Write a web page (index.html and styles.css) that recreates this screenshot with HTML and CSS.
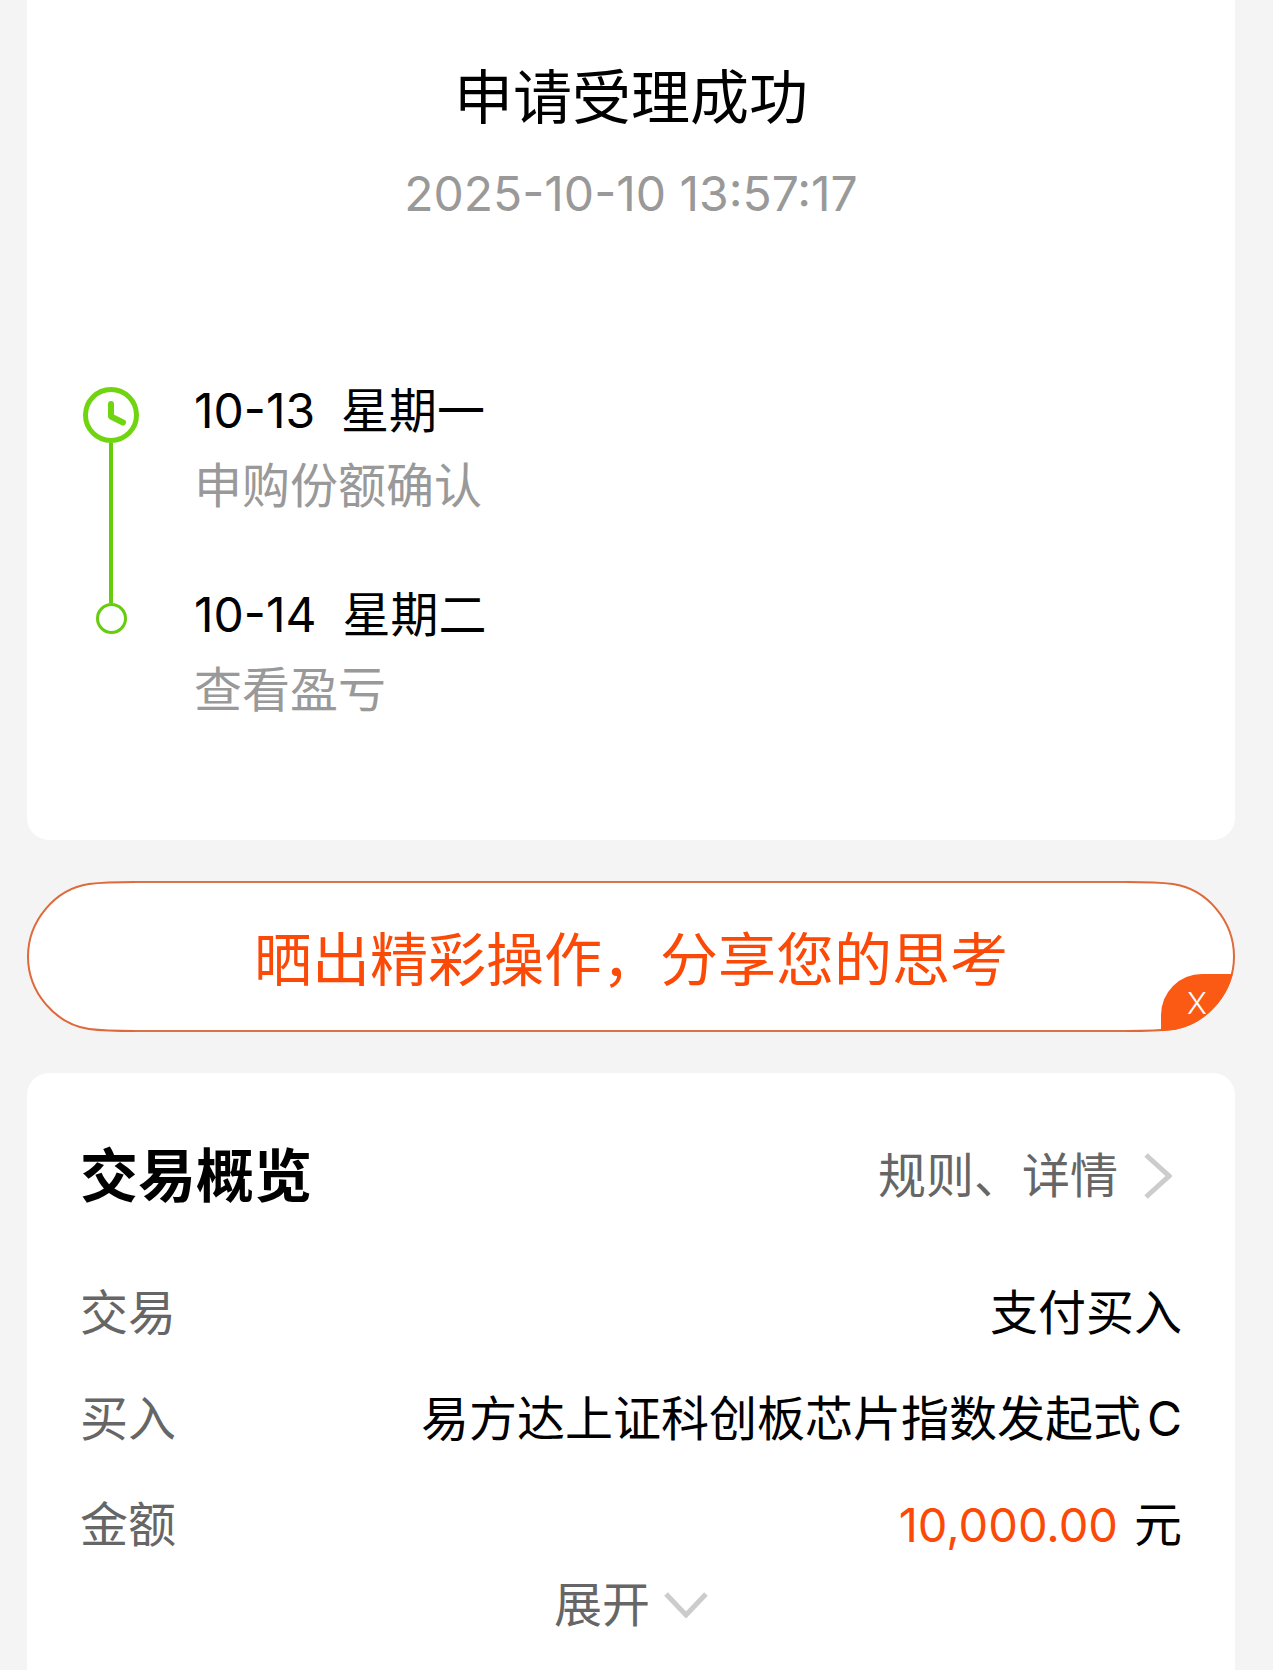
FILE: index.html
```html
<!DOCTYPE html>
<html lang="zh-CN">
<head>
    <meta charset="UTF-8">
    <meta name="viewport" content="width=device-width, initial-scale=1.0">
    <title>申请受理成功</title>
    <link rel="stylesheet" href="styles.css">
</head>
<body>
    <section class="card result">
        <h1>申请受理成功</h1>
        <time class="result-time">2025-10-10 13:57:17</time>
        <ol class="timeline">
            <li class="step">
                <div class="marker">
                    <svg class="clock" viewBox="0 0 56 56" aria-hidden="true">
                        <circle cx="28" cy="28" r="25.5"/>
                        <path d="M28 17V29.5L40 35.5"/>
                    </svg>
                    <span class="line"></span>
                </div>
                <div class="step-text">
                    <div class="step-date"><span>10-13</span><span>星期一</span></div>
                    <div class="step-desc">申购份额确认</div>
                </div>
            </li>
            <li class="step">
                <div class="marker">
                    <span class="dot"></span>
                </div>
                <div class="step-text">
                    <div class="step-date"><span>10-14</span><span>星期二</span></div>
                    <div class="step-desc">查看盈亏</div>
                </div>
            </li>
        </ol>
    </section>

    <div class="share">
        <button class="share-btn" type="button">
            <svg class="cap" viewBox="0 0 108 151" aria-hidden="true">
                <path d="M108 1C88 1 70 2 62 3C28 8 1 40 1 75.5S28 143 62 148C70 149 88 150 108 150"/>
            </svg>
            <span class="share-text">晒出精彩操作，分享您的思考</span>
            <svg class="cap" viewBox="0 0 108 151" aria-hidden="true">
                <path d="M0 1C20 1 38 2 46 3C80 8 107 40 107 75.5S80 143 46 148C38 149 20 150 0 150"/>
            </svg>
        </button>
        <button class="share-close" type="button" aria-label="关闭">
            <svg viewBox="34 93 74 58" aria-hidden="true">
                <clipPath id="pill-end">
                    <path d="M0 0C20 0 38 1 46 2C80 7 108 40 108 75.5S80 144 46 149C38 150 20 151 0 151Z"/>
                </clipPath>
                <path clip-path="url(#pill-end)" d="M34 151V134A41 41 0 0 1 75 93H108V151Z"/>
            </svg>
            <span>X</span>
        </button>
    </div>

    <section class="card overview">
        <header class="overview-head">
            <h2>交易概览</h2>
            <a class="detail-link" href="#">规则、详情
                <svg class="arrow-right" viewBox="0 0 28 46" aria-hidden="true"><path d="M2 2L25 23L2 44"/></svg>
            </a>
        </header>
        <dl class="rows">
            <div class="row"><dt>交易</dt><dd>支付买入</dd></div>
            <div class="row"><dt>买入</dt><dd>易方达上证科创板芯片指数发起式<span class="share-class">C</span></dd></div>
            <div class="row"><dt>金额</dt><dd><span class="amount">10,000.00</span>元</dd></div>
        </dl>
        <button class="expand" type="button">展开
            <svg class="arrow-down" viewBox="0 0 44 26" aria-hidden="true"><path d="M2 2L22 23L42 2"/></svg>
        </button>
    </section>
</body>
</html>
```

FILE: styles.css
```css
* { box-sizing: border-box; margin: 0; padding: 0; }
body {
    padding: 0 38px 0 27px; background: #f4f4f4; color: #000;
    font-family: Inter, "Noto Sans CJK SC", sans-serif;
    font-size: 48px; line-height: 64px;
}
button { border: none; background: none; font: inherit; cursor: pointer; }
svg { display: block; flex: none; fill: none; }

.card { background: #fff; }
.result { padding: 62px 56px 118px; border-radius: 0 0 22px 22px; }
h1 { font-size: 59px; font-weight: 400; line-height: 72px; text-align: center; }
.result-time { display: block; margin-top: 28px; color: #999; text-align: center; }

.timeline { margin-top: 153px; list-style: none; }
.step { display: flex; gap: 55px; }
.marker { display: flex; flex-direction: column; align-items: center; width: 56px; }
.clock { width: 56px; height: 56px; margin-top: 8px; stroke: #70d410; stroke-width: 5; }
.clock path { stroke-width: 6; stroke-linecap: round; stroke-linejoin: round; }
.line { flex: 1; width: 4px; margin-bottom: -20px; background: #66cc0d; }
.dot {
    width: 31px; height: 31px; margin-top: 20px;
    border: 3px solid #66cc0d; border-radius: 50%;
}
.step-text { padding-bottom: 65px; }
.step:last-child .step-text { padding-bottom: 0; }
.step-date { display: flex; gap: 26px; }
.step-desc { margin-top: 11px; color: #999; }

.share { position: relative; margin: 41px 0; }
.share-btn { display: flex; width: 100%; height: 151px; color: #fb4a08; }
.cap { width: 108px; height: 151px; fill: #fff; stroke: #e0693a; stroke-width: 2; }
.share-text {
    flex: 1; height: 151px; padding-top: 4px; background: #fff;
    font-size: 58px; line-height: 147px;
    border-top: 2px solid #d9734a; border-bottom: 2px solid #d9734a;
}
.share-close {
    position: absolute; right: 0; bottom: 0; width: 74px; height: 58px;
    padding-right: 2px; color: #fff; font-size: 30px; line-height: 56px;
}
.share-close svg { position: absolute; inset: 0; fill: #fb5a14; }
.share-close span { position: relative; font-weight: 300; }

.overview { padding: 67px 53px 38px; border-radius: 22px 22px 0 0; }
.overview-head { display: flex; align-items: center; justify-content: space-between; }
h2 { font-size: 58px; font-weight: 700; line-height: 72px; }
.detail-link {
    display: flex; align-items: center; gap: 26px; padding-right: 10px;
    color: #666; text-decoration: none;
}
.arrow-right { width: 28px; height: 46px; stroke: #ccc; stroke-width: 5; }
.rows { display: flex; flex-direction: column; gap: 34px; margin-top: 65px; line-height: 72px; }
.row { display: flex; justify-content: space-between; }
dt { color: #666; }
.share-class { margin-left: 6px; }
.amount { margin-right: 16px; color: #fb4a08; font-size: 47px; }
.expand { display: flex; align-items: center; gap: 14px; margin: 12px auto 0; color: #666; }
.arrow-down { width: 44px; height: 26px; stroke: #ccc; stroke-width: 5; }
```
